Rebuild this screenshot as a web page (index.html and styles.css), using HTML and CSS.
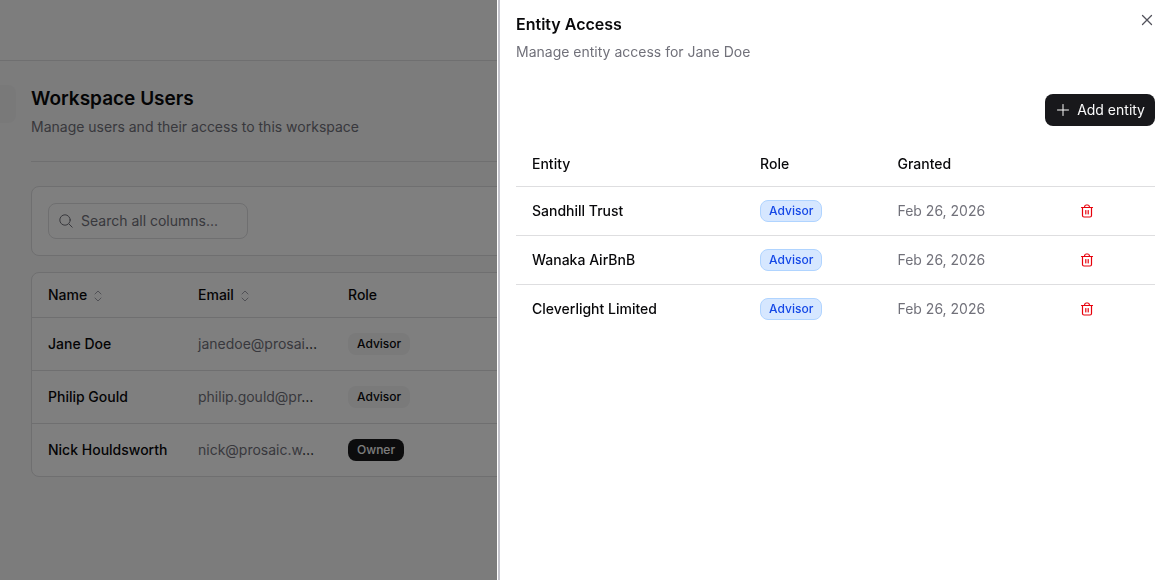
FILE: index.html
```html
<!DOCTYPE html>
<html lang="en">
<head>
    <meta charset="UTF-8">
    <meta name="viewport" content="width=device-width, initial-scale=1.0">
    <title>Workspace Users</title>
    <link rel="stylesheet" href="styles.css">
</head>
<body>
    <!-- Icons -->
    <svg class="icon-defs" aria-hidden="true">
        <symbol id="icon-sort" viewBox="0 0 8 12">
            <path d="M1 4 L4 1 L7 4 M1 8 L4 11 L7 8" />
        </symbol>
        <symbol id="icon-trash" viewBox="0 0 14 14">
            <path stroke-width="1.2" d="M1.5 3.5 H12.5 M4.500 3.300 Q4.700 1 6 1 H8 Q9.300 1 9.500 3.300 M2.500 3.500 V11.500 Q2.500 13 4 13 H10 Q11.500 13 11.500 11.500 V3.500" />
            <path stroke-width="0.8" d="M5.500 6.500 V10 M7 6.500 V10 M8.500 6.500 V10" />
        </symbol>
    </svg>

    <div class="page">
        <header></header>
        <main>
            <div class="sidebar-tab"></div>
            <div class="page-heading">
                <h1>Workspace Users</h1>
                <p>Manage users and their access to this workspace</p>
            </div>

            <div class="card search-card">
                <label class="search-box">
                    <svg class="icon" width="14" height="14" viewBox="0 0 14 14" aria-hidden="true">
                        <circle cx="6" cy="6" r="5.200" />
                        <path d="M10 10 L13.200 13.200" />
                    </svg>
                    <input type="text" placeholder="Search all columns..." aria-label="Search all columns">
                </label>
            </div>

            <div class="card">
                <table class="users-table">
                    <thead>
                        <tr>
                            <th class="col">Name <svg class="icon sort"><use href="#icon-sort" /></svg></th>
                            <th class="col">Email <svg class="icon sort"><use href="#icon-sort" /></svg></th>
                            <th>Role</th>
                        </tr>
                    </thead>
                    <tbody>
                        <tr>
                            <td>Jane Doe</td>
                            <td class="email"><span class="muted">janedoe@prosai</span>…</td>
                            <td><span class="badge">Advisor</span></td>
                        </tr>
                        <tr>
                            <td>Philip Gould</td>
                            <td class="email"><span class="muted">philip.gould@pr</span>…</td>
                            <td><span class="badge">Advisor</span></td>
                        </tr>
                        <tr>
                            <td>Nick Houldsworth</td>
                            <td class="email"><span class="muted">nick@prosaic.w</span>…</td>
                            <td><span class="badge badge-dark">Owner</span></td>
                        </tr>
                    </tbody>
                </table>
            </div>
        </main>
    </div>

    <div class="overlay"></div>

    <aside class="panel" role="dialog" aria-labelledby="panel-title">
        <button class="close-button" aria-label="Close">
            <svg class="icon" width="12" height="12" viewBox="0 0 12 12"><path stroke-width="1.3" d="M1.500 1.500 L10.500 10.500 M10.500 1.500 L1.500 10.500" /></svg>
        </button>
        <h2 id="panel-title">Entity Access</h2>
        <p>Manage entity access for Jane Doe</p>

        <div class="panel-actions">
            <button class="add-button">
                <svg class="icon" width="12" height="12" viewBox="0 0 12 12" aria-hidden="true"><path d="M6 0.500 V11.500 M0.500 6 H11.500" /></svg>
                Add entity
            </button>
        </div>

        <table class="entity-table">
            <thead>
                <tr>
                    <th class="col-entity">Entity</th>
                    <th class="col-role">Role</th>
                    <th class="col-granted">Granted</th>
                    <th></th>
                </tr>
            </thead>
            <tbody>
                <tr>
                    <td>Sandhill Trust</td>
                    <td><span class="badge badge-blue">Advisor</span></td>
                    <td class="muted">Feb 26, 2026</td>
                    <td><button class="delete-button" aria-label="Remove Sandhill Trust"><svg class="icon"><use href="#icon-trash" /></svg></button></td>
                </tr>
                <tr>
                    <td>Wanaka AirBnB</td>
                    <td><span class="badge badge-blue">Advisor</span></td>
                    <td class="muted">Feb 26, 2026</td>
                    <td><button class="delete-button" aria-label="Remove Wanaka AirBnB"><svg class="icon"><use href="#icon-trash" /></svg></button></td>
                </tr>
                <tr>
                    <td>Cleverlight Limited</td>
                    <td><span class="badge badge-blue">Advisor</span></td>
                    <td class="muted">Feb 26, 2026</td>
                    <td><button class="delete-button" aria-label="Remove Cleverlight Limited"><svg class="icon"><use href="#icon-trash" /></svg></button></td>
                </tr>
            </tbody>
        </table>
    </aside>
</body>
</html>
```
FILE: styles.css
```css
/* Global Styles */
* {
    box-sizing: border-box;
}

body {
    font-family: Inter, 'Liberation Sans', sans-serif;
    font-size: 14px;
    line-height: 20px;
    margin: 0;
    background: #f8f8f8;
    color: #09090b;
}

h1, h2, p {
    margin: 0;
}

button {
    font: inherit;
    border: none;
    padding: 0;
    background: none;
    cursor: pointer;
}

table {
    width: 100%;
    border-collapse: collapse;
    table-layout: fixed;
}

th, td {
    padding: 0 16px;
    font-weight: 500;
    text-align: left;
    white-space: nowrap;
}

.muted {
    color: #71717a;
    font-weight: 400;
}

.icon {
    fill: none;
    stroke: currentColor;
    stroke-linecap: round;
    stroke-linejoin: round;
}

.icon-defs {
    display: none;
}

/* Workspace page */
.page {
    height: 100vh;
    overflow: hidden;
}

header {
    height: 61px;
    border-bottom: 1px solid #dedee0;
    background: #fafafa;
}

main {
    position: relative;
    padding: 24px 31px;
}

.sidebar-tab {
    position: absolute;
    left: 0;
    top: 24px;
    width: 16px;
    height: 38px;
    border-radius: 0 8px 8px 0;
    background: #f2f2f3;
}

.page-heading {
    padding-bottom: 24px;
    margin-bottom: 24px;
    border-bottom: 1px solid #dedee0;
}

h1 {
    font-size: 19px;
    line-height: 28px;
    font-weight: 600;
}

.page-heading p {
    margin-top: 4px;
    color: #71717a;
}

.card {
    border: 1px solid #dedee0;
    border-radius: 8px;
    background: #fff;
    margin-bottom: 16px;
}

.search-card {
    padding: 16px;
}

.search-box {
    display: flex;
    align-items: center;
    gap: 8px;
    width: 200px;
    height: 36px;
    padding: 0 10px;
    border: 1px solid #dedee0;
    border-radius: 8px;
    color: #71717a;
}

    .search-box svg {
        flex: none;
    }

    .search-box input {
        width: 100%;
        border: none;
        padding: 0;
        outline: none;
        background: none;
        font: inherit;
    }

        .search-box input::placeholder {
            color: #71717a;
        }

.users-table th {
    height: 44px;
}

    .users-table .col {
        width: 150px;
    }

.users-table td {
    height: 53px;
    border-top: 1px solid #dedee0;
}

.users-table .email {
    font-weight: 400;
}

.sort {
    width: 8px;
    height: 12px;
    margin-left: 3px;
    vertical-align: middle;
    color: #a1a1aa;
}

.badge {
    display: inline-block;
    padding: 2px 8px;
    border: 1px solid transparent;
    border-radius: 8px;
    background: #f4f4f5;
    font-size: 12px;
    line-height: 16px;
    font-weight: 500;
    vertical-align: middle;
}

.badge-dark {
    background: #18181b;
    color: #fafafa;
}

.badge-blue {
    background: #d6e7ff;
    border-color: #b0d4ff;
    color: #1447e6;
}

/* Side panel */
.overlay {
    position: fixed;
    inset: 0;
    background: rgba(0, 0, 0, 0.5);
}

.panel {
    position: fixed;
    top: 0;
    right: 0;
    bottom: 0;
    width: 672px;
    max-width: 100%;
    padding: 12px 15px 16px 16px;
    border-left: 2px solid #c4c4cc;
    box-shadow: -1px 0 0 #fff;
    background: #fff;
}

    .panel h2 {
        font-size: 16px;
        line-height: 24px;
        font-weight: 600;
    }

    .panel p {
        margin-top: 6px;
        color: #71717a;
    }

.close-button {
    position: absolute;
    top: 12px;
    right: 15px;
    width: 16px;
    height: 16px;
    display: flex;
    align-items: center;
    justify-content: center;
    color: #52525b;
}

.panel-actions {
    display: flex;
    justify-content: flex-end;
    margin: 32px 0 16px;
}

.add-button {
    display: flex;
    align-items: center;
    gap: 8px;
    height: 32px;
    padding: 0 10px 0 12px;
    border-radius: 8px;
    background: #18181b;
    color: #fafafa;
}

.entity-table th {
    height: 44px;
}

.entity-table td {
    height: 49px;
    border-top: 1px solid #dedee0;
}

.col-entity {
    width: 35.7%;
}

.col-role {
    width: 21.5%;
}

.col-granted {
    width: 28.6%;
}

.delete-button {
    display: block;
    color: #e7000b;
}

    .delete-button svg {
        display: block;
        width: 14px;
        height: 14px;
    }
```
